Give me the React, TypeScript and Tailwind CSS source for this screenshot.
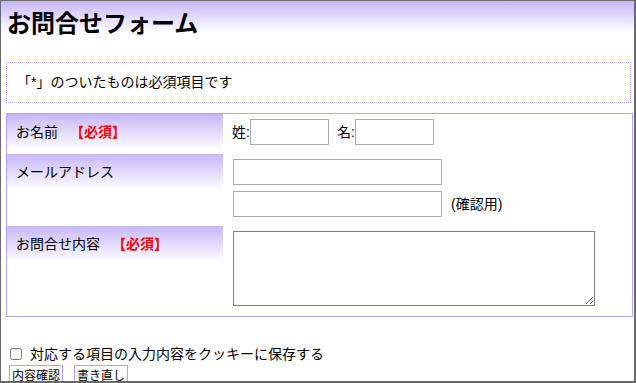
const labelCell =
  'w-[216px] shrink-0 pl-[9px] pt-[9px] text-[14px] leading-[18px] bg-[linear-gradient(#c7b6fb,#ffffff)] bg-no-repeat bg-[length:100%_36px]';

const Required = () => <span className="ml-[12px] font-bold text-[#ff0000]">【必須】</span>;

export default function App() {
  return (
    <div
      className="w-[636px] h-[383px] overflow-hidden bg-white text-black border-t border-l border-r-2 border-b-2 border-[#6a6a6a]"
      style={{ fontFamily: '"Liberation Sans", "Noto Sans CJK JP", sans-serif' }}
    >
      {/* header */}
      <div className="h-[42px] pt-[8px] pl-[6px] bg-[linear-gradient(#c6b6fc,#ffffff)] bg-no-repeat bg-[length:100%_32px]">
        <h1 className="text-[24px] leading-[30px] font-bold">お問合せフォーム</h1>
      </div>

      {/* notice */}
      <div className="mt-[19px] ml-[5px] mr-[3px] h-[41px] flex items-center pl-[10px] border border-dotted border-[#ad94f6] text-[14px]">
        「*」のついたものは必須項目です
      </div>

      {/* form */}
      <div className="mt-[10px] ml-[5px] mr-[1px] h-[204px] border border-[#b9a2f6] flex flex-col gap-[1px]">
        <div className="flex h-[39px]">
          <div className={labelCell}>
            お名前<Required />
          </div>
          <div className="flex items-start pt-[5px] pl-[9px] text-[14px]">
            <span className="leading-[26px]">姓:</span>
            <input type="text" className="w-[79px] h-[26px] border border-[#a9a9a9] bg-white" />
            <span className="ml-[8px] leading-[26px]">名:</span>
            <input type="text" className="w-[79px] h-[26px] border border-[#a9a9a9] bg-white" />
          </div>
        </div>

        <div className="flex h-[71px]">
          <div className={labelCell}>メールアドレス</div>
          <div className="flex flex-col gap-[6px] pt-[5px] pl-[10px] text-[14px]">
            <input type="text" className="w-[209px] h-[26px] border border-[#a9a9a9] bg-white" />
            <div className="flex items-center">
              <input type="text" className="w-[209px] h-[26px] border border-[#a9a9a9] bg-white" />
              <span className="ml-[9px]">(確認用)</span>
            </div>
          </div>
        </div>

        <div className="flex flex-1">
          <div className={labelCell}>
            お問合せ内容<Required />
          </div>
          <div className="pt-[5px] pl-[10px]">
            <textarea className="block w-[362px] h-[75px] border border-[#7f7f7f] bg-white resize" />
          </div>
        </div>
      </div>

      {/* cookie */}
      <label className="mt-[28px] ml-[9px] flex items-center gap-[8px] text-[14px] leading-[18px]">
        <input type="checkbox" className="w-[12px] h-[12px] m-0" />
        対応する項目の入力内容をクッキーに保存する
      </label>

      <div className="mt-[2px] ml-[8px] flex gap-[11px]">
        <button className="w-[54px] h-[22px] border border-[#b9a2f6] bg-white text-[12px] leading-[20px]">内容確認</button>
        <button className="w-[54px] h-[22px] border border-[#b9a2f6] bg-white text-[12px] leading-[20px]">書き直し</button>
      </div>
    </div>
  );
}
